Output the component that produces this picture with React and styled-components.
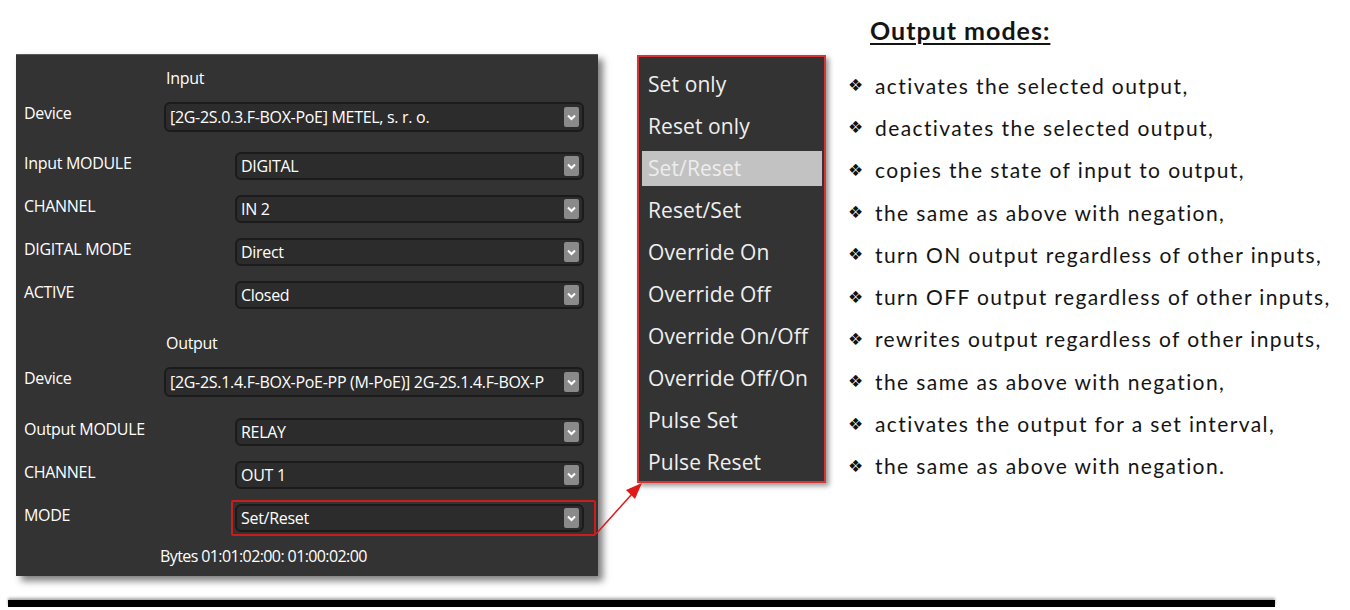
import React from 'react';
import styled, { createGlobalStyle } from 'styled-components';

const Global = createGlobalStyle`
  html, body { margin: 0; padding: 0; background: #fff; }
  body { width: 1350px; height: 610px; overflow: hidden; }
`;

const Page = styled.div`
  position: relative;
  width: 1350px;
  height: 610px;
  display: flex;
  flex-direction: column;
`;

const Content = styled.div`
  display: flex;
  align-items: flex-start;
  height: 600px;
`;

const Panel = styled.section`
  margin: 54px 0 0 16px;
  width: 582px;
  height: 522px;
  box-sizing: border-box;
  background: #333333;
  border-top: 1px solid #5a5a5a;
  box-shadow: 5px 5px 7px rgba(0, 0, 0, 0.5);
  padding: 13px 14px 0 8px;
  font-family: "Open Sans", sans-serif;
  font-size: 16px;
  letter-spacing: -0.3px;
  color: #fff;
  display: flex;
  flex-direction: column;
`;

const SectionTitle = styled.div`
  line-height: 20px;
  padding-left: 142px;
  margin-top: ${p => p.$top || 0}px;
  margin-bottom: 14px;
`;

const Row = styled.div`
  display: flex;
  align-items: flex-start;
  margin-bottom: ${p => p.$gap}px;
`;

const Label = styled.div`
  width: ${p => p.$w}px;
  flex-shrink: 0;
  line-height: 20px;
  margin-top: 1px;
`;

const Select = styled.div`
  flex: 1;
  min-width: 0;
  height: ${p => (p.$tall ? 30 : 28)}px;
  box-sizing: border-box;
  border: 2px solid #1b1b1b;
  border-radius: 6px;
  background: #2c2c2c;
  display: flex;
  align-items: center;
  padding: 0 3px 0 4px;
  position: relative;
`;

const Marked = styled.div`
  flex: 1;
  min-width: 0;
  position: relative;
  display: flex;
  &::after {
    content: "";
    position: absolute;
    top: -4px;
    bottom: -4px;
    left: -4px;
    right: -12px;
    border: 2px solid #c81e1e;
    border-radius: 2px;
    pointer-events: none;
  }
`;

const Value = styled.span`
  flex: 1;
  min-width: 0;
  white-space: nowrap;
  line-height: 20px;
`;

const ArrowBtn = styled.span`
  width: 15px;
  height: 20px;
  flex-shrink: 0;
  margin-left: 6px;
  border-radius: 2px;
  background: #8a8a8a;
  display: flex;
  align-items: center;
  justify-content: center;
`;

const Bytes = styled.div`
  line-height: 20px;
  padding-left: 136px;
  letter-spacing: -0.6px;
`;

const Menu = styled.ul`
  list-style: none;
  margin: 55px 0 0 39px;
  padding: 10px 0 0 0;
  width: 189px;
  height: 428px;
  box-sizing: border-box;
  background: #333333;
  border: 2px solid #d43535;
  box-shadow: 3px 3px 5px rgba(0, 0, 0, 0.4);
  font-family: "Open Sans", sans-serif;
  font-size: 21px;
  letter-spacing: 0.1px;
`;

const MenuItem = styled.li`
  height: 35px;
  margin: 0 2px 7px 3px;
  padding-left: 6px;
  line-height: 35px;
  white-space: nowrap;
  color: ${p => (p.$active ? '#ededed' : '#efefef')};
  background: ${p => (p.$active ? '#c2c2c2' : 'transparent')};
`;

const Notes = styled.div`
  margin-left: 22px;
  font-family: Lato, "Open Sans", sans-serif;
  color: #141414;
`;

const NotesTitle = styled.h2`
  margin: 15px 0 0 22px;
  font-size: 25px;
  line-height: 30px;
  font-weight: 700;
  text-decoration: underline;
  text-decoration-thickness: 2px;
  text-underline-offset: 3px;
  letter-spacing: 1px;
`;

const NoteList = styled.ul`
  list-style: none;
  margin: 19px 0 0 0;
  padding: 0;
`;

const Note = styled.li`
  display: flex;
  align-items: center;
  height: 42.3px;
  font-size: 21px;
  letter-spacing: 1.4px;
  white-space: nowrap;
`;

const Bullet = styled.span`
  font-family: "DejaVu Sans", sans-serif;
  font-size: 17px;
  width: 27px;
  letter-spacing: 0;
  color: #111;
`;

const Rule = styled.div`
  margin-left: 8px;
  width: 1267px;
  height: 7px;
  background: #000;
  box-shadow: 0 -2px 3px rgba(0, 0, 0, 0.35);
`;

const Pointer = styled.svg`
  position: absolute;
  left: 0;
  top: 0;
  pointer-events: none;
`;

const Chevron = () => (
  <svg width="9" height="7" viewBox="0 0 9 7">
    <path d="M1 1.5 L4.5 5 L8 1.5" fill="none" stroke="#fff" strokeWidth="2" />
  </svg>
);

const Field = ({ label, value, labelW, tall, gap, marked }) => {
  const sel = (
    <Select $tall={tall}>
      <Value>{value}</Value>
      <ArrowBtn><Chevron /></ArrowBtn>
    </Select>
  );
  return (
    <Row $gap={gap}>
      <Label $w={labelW}>{label}</Label>
      {marked ? <Marked>{sel}</Marked> : sel}
    </Row>
  );
};

const modes = [
  'Set only', 'Reset only', 'Set/Reset', 'Reset/Set', 'Override On',
  'Override Off', 'Override On/Off', 'Override Off/On', 'Pulse Set', 'Pulse Reset',
];

const notes = [
  'activates the selected output,',
  'deactivates the selected output,',
  'copies the state of input to output,',
  'the same as above with negation,',
  'turn ON output regardless of other inputs,',
  'turn OFF output regardless of other inputs,',
  'rewrites output regardless of other inputs,',
  'the same as above with negation,',
  'activates the output for a set interval,',
  'the same as above with negation.',
];

export default function App() {
  return (
    <Page>
      <Global />
      <Content>
        <Panel>
          <SectionTitle>Input</SectionTitle>
          <Field label="Device" value="[2G-2S.0.3.F-BOX-PoE] METEL, s. r. o." labelW={140} tall gap={20} />
          <Field label="Input MODULE" value="DIGITAL" labelW={211} gap={15} />
          <Field label="CHANNEL" value="IN 2" labelW={211} gap={15} />
          <Field label="DIGITAL MODE" value="Direct" labelW={211} gap={15} />
          <Field label="ACTIVE" value="Closed" labelW={211} gap={0} />
          <SectionTitle $top={24}>Output</SectionTitle>
          <Field label="Device" value="[2G-2S.1.4.F-BOX-PoE-PP (M-PoE)] 2G-2S.1.4.F-BOX-P" labelW={140} tall gap={21} />
          <Field label="Output MODULE" value="RELAY" labelW={211} gap={15} />
          <Field label="CHANNEL" value="OUT 1" labelW={211} gap={15} />
          <Field label="MODE" value="Set/Reset" labelW={211} gap={14} marked />
          <Bytes>Bytes 01:01:02:00: 01:00:02:00</Bytes>
        </Panel>
        <Menu>
          {modes.map(m => (
            <MenuItem key={m} $active={m === 'Set/Reset'}>{m}</MenuItem>
          ))}
        </Menu>
        <Notes>
          <NotesTitle>Output modes:</NotesTitle>
          <NoteList>
            {notes.map((n, i) => (
              <Note key={i}><Bullet>❖</Bullet>{n}</Note>
            ))}
          </NoteList>
        </Notes>
      </Content>
      <Rule />
      <Pointer width="1350" height="610">
        <line x1="596" y1="534" x2="632" y2="494" stroke="#e01818" strokeWidth="1.5" />
        <polygon points="642,483 626,490 635,499" fill="#e01818" />
      </Pointer>
    </Page>
  );
}
